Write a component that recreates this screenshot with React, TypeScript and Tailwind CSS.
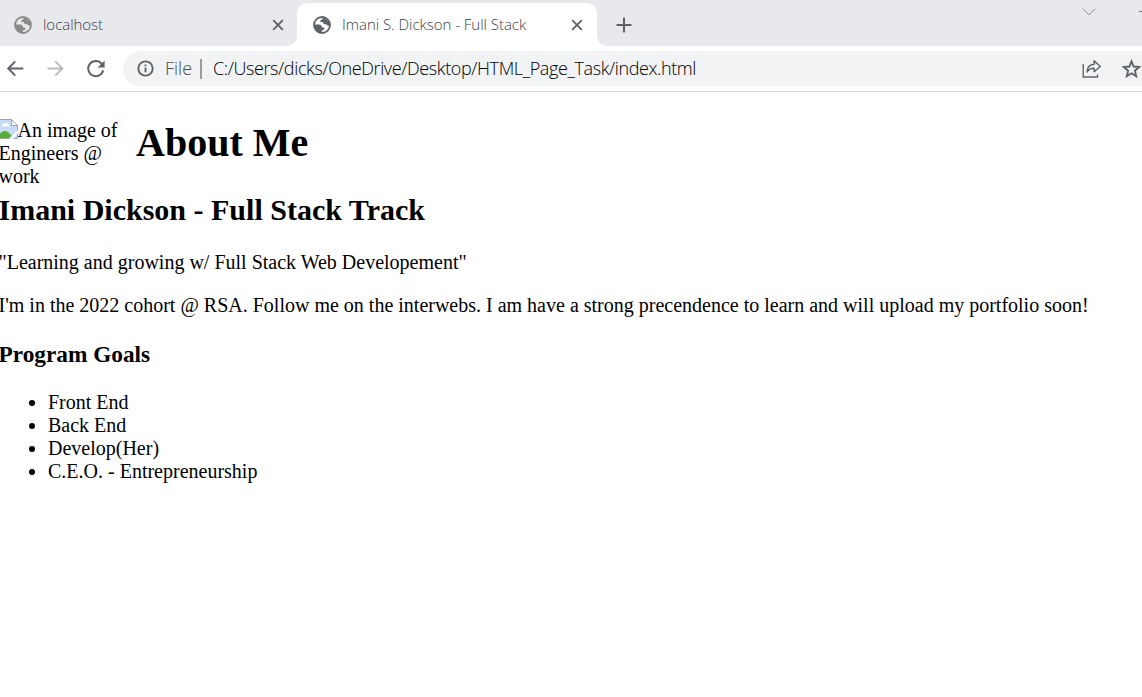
import type { ReactNode } from 'react';

function Globe({ className }: { className: string }) {
  return (
    <svg viewBox="0 0 18 18" className={`size-[18px] shrink-0 ${className}`}>
      <circle cx="9" cy="9" r="8" fill="none" stroke="currentColor" strokeWidth="1.8" />
      <path
        fill="currentColor"
        d="M10.2 1.2 16.6 6v3.6c-1.2.6-2 .3-2.5-.5-.5-.9-1.400-.9-2.300-.9-1 0-1.700-.5-1.700-1.400 0-.8-1.100-.7-2.200-.7-.8 0-.8-.9-.3-1.600.5-.8 1.400-.6 1.800-1.400.3-.7.500-1.300.8-1.900ZM1.200 8.500h5c1.500 0 2.400.8 2.400 2 0 .8.800.9 1.700.9 1 0 1.200.6 1.100 1.500-.1.800-.9 1-1.600 1.200-.8.300-1 .8-1 2.700C4 16.500 1 13.500 1.200 8.500Z"
      />
    </svg>
  );
}

function Cross() {
  return (
    <svg viewBox="0 0 12 12" className="size-3 shrink-0 text-[#5f6368]" fill="none" stroke="currentColor" strokeWidth="1.9">
      <path d="m1.200 1.200 9.600 9.600m0-9.600-9.600 9.600" />
    </svg>
  );
}

function Icon({ children, className }: { children: ReactNode; className: string }) {
  return (
    <svg viewBox="0 0 20 20" className={`size-5 shrink-0 ${className}`} fill="none" stroke="currentColor" strokeWidth="1.9">
      {children}
    </svg>
  );
}

function TabStrip() {
  return (
    <div className="flex h-[46px] bg-[#e8e9ed] text-[#3c4043]">
      <div className="flex w-[297px] shrink-0 bg-white">
        <div className="flex w-full items-center rounded-br-[10px] bg-[#e8e9ed] pt-[3px] pr-[13px] pl-[14px]">
          <Globe className="text-[#8a8a8a]" />
          <span className="ml-[11px] grow text-[15px] font-light tracking-[-0.03px]">localhost</span>
          <Cross />
        </div>
      </div>
      <div className="flex w-[300px] shrink-0 flex-col">
        <div className="mt-[3px] flex grow items-center rounded-t-[10px] bg-white pr-[14px] pl-4">
          <Globe className="text-[#5f6368]" />
          <span className="ml-[11px] grow text-[15px] font-light tracking-[-0.03px] whitespace-nowrap">Imani S. Dickson - Full Stack</span>
          <Cross />
        </div>
      </div>
      <div className="flex grow bg-white">
        <div className="flex grow items-start justify-between rounded-bl-[10px] bg-[#e8e9ed]">
          <svg viewBox="0 0 16 16" className="mt-[17px] ml-[19px] size-4" fill="none" stroke="#5f6368" strokeWidth="2">
            <path d="M8 .5v15M.5 8h15" />
          </svg>
          <div className="flex items-start">
            <svg viewBox="0 0 14 8" className="mt-2 h-2 w-[14px]" fill="none" stroke="#888" strokeWidth="1">
              <path d="m1 .8 6 6 6-6" />
            </svg>
            <span className="mt-[11px] ml-[43px] h-px w-[3px] bg-[#777]" />
          </div>
        </div>
      </div>
    </div>
  );
}

function Toolbar() {
  return (
    <div className="flex h-[46px] border-b border-[#dadce0] bg-white pt-[5px] pb-[5px] pl-[5px]">
      <div className="flex w-[118px] shrink-0 items-center gap-5 text-[#5f6368]">
        <Icon className="">
          <path d="M18.300 9.500H3.500M10.300 2.300 3.200 9.500l7.100 7.200" />
        </Icon>
        <Icon className="text-[#babcbe]">
          <path d="M2.500 9.500h15M10.300 2.300l7.200 7.200-7.200 7.200" />
        </Icon>
        <Icon className="">
          <path d="M16.700 4.800a7.600 7.600 0 1 0 1.500 6.400" />
          <path d="M19.600 1.500v7h-7Z" fill="currentColor" stroke="none" />
        </Icon>
      </div>
      <div className="flex h-[35px] grow items-center rounded-l-full bg-[#f1f3f4] text-[18px] text-[#4a4d51]">
        <svg viewBox="0 0 18 18" className="ml-[14px] size-[17px] shrink-0" fill="none" stroke="#5f6368" strokeWidth="2">
          <circle cx="9" cy="9" r="7.600" />
          <path d="M9 7.900v5M9 4.700v2" />
        </svg>
        <span className="ml-[11px] w-[35px] font-light">File</span>
        <span className="h-5 w-[2px] bg-[#9a9c9f]" />
        <span className="ml-[11px] grow font-light tracking-[-0.385px] text-black">
          C:/Users/dicks/OneDrive/Desktop/HTML_Page_Task/index.html
        </span>
        <svg viewBox="0 0 20 20" className="size-5 shrink-0" fill="none" stroke="#5f6368" strokeWidth="1.400">
          <path d="M1.200 5v13h14.300v-2.500" />
          <path d="M5 13c.3-4.800 2.500-7.500 7.100-7.700V1.700L18.300 7.500l-6.200 5.200V9.200C8.900 9.100 6.800 10.300 5 13Z" strokeLinejoin="round" />
        </svg>
        <svg viewBox="0 0 20 20" className="ml-5 size-5 shrink-0" fill="none" stroke="#5f6368" strokeWidth="1.900">
          <path d="m9.500 2.300 2.100 5.200 5.600.5-4.300 3.700 1.300 5.500-4.700-2.900-4.700 2.900 1.300-5.500L1.800 8l5.600-.5Z" />
        </svg>
      </div>
    </div>
  );
}

function BrokenImage() {
  return (
    <svg viewBox="0 0 20 20" className="-ml-px inline-block size-5 align-[-2px]">
      <path d="M.5.500h13l6 6v13H.5Z" fill="#c8dbfa" stroke="#a3a3a3" />
      <path d="M13.500.500v6h6Z" fill="#fff" stroke="#a3a3a3" />
      <path d="M4 7c0-2 1.500-2 2.500-2 .5-2 3-1.500 3.500.5 2 0 2 2 0 2H4.500Z" fill="#fff" />
      <path d="M1 19v-3c3-4 6-5 9-3l4 4-3 2Z" fill="#58ad38" />
      <path d="M11 20 20 11v3l-5 6Z" fill="#fff" />
    </svg>
  );
}

export default function App() {
  return (
    <div className="h-[697px] w-[1142px] overflow-hidden bg-white font-['Open_Sans','Noto_Sans',sans-serif]">
      <TabStrip />
      <Toolbar />
      <main className="-ml-[1.500px] font-['Liberation_Serif',serif] text-[20px] leading-[23px] text-black">
        <header className="flex h-[95px] pt-[27px]">
          <p className="w-[137.500px] shrink-0 whitespace-nowrap">
            <BrokenImage />An image of<br />Engineers @<br />work
          </p>
          <h1 className="pt-px text-[40px] leading-[46px] font-bold">About Me</h1>
        </header>
        <h2 className="mt-[6px] text-[30px] leading-[34px] font-bold">Imani Dickson - Full Stack Track</h2>
        <p className="mt-[24px]">"Learning and growing w/ Full Stack Web Developement"</p>
        <p className="mt-5 whitespace-nowrap">
          I'm in the 2022 cohort @ RSA. Follow me on the interwebs. I am have a strong precendence to learn and will upload my portfolio soon!
        </p>
        <h3 className="mt-[24px] text-[23.300px] leading-[27px] font-bold">Program Goals</h3>
        <ul className="mt-[23px] list-disc pl-[49.500px]">
          <li>Front End</li>
          <li>Back End</li>
          <li>Develop(Her)</li>
          <li>C.E.O. - Entrepreneurship</li>
        </ul>
      </main>
    </div>
  );
}
